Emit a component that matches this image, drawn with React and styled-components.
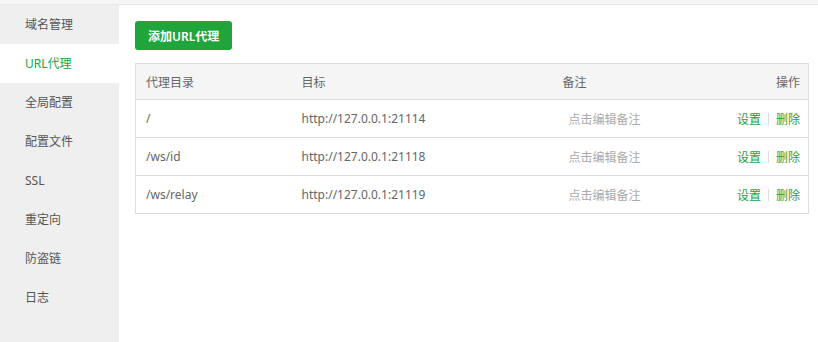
import React from "react";
import styled, { createGlobalStyle } from "styled-components";

const Global = createGlobalStyle`
  html, body { margin: 0; padding: 0; background: #fff; }
  body { font-family: "Noto Sans", "Noto Sans CJK SC", sans-serif; font-size: 12px; color: #666; }
`;

const Page = styled.div`
  width: 818px;
  height: 342px;
  display: flex;
  flex-direction: column;
  overflow: hidden;
`;

const TopStrip = styled.div`
  height: 4px;
  background: #f6f6f6;
  border-bottom: 1px solid #e6e6e6;
  flex: none;
`;

const Body = styled.div`
  flex: 1;
  display: flex;
`;

const Sidebar = styled.ul`
  width: 119px;
  margin: 0;
  padding: 0;
  list-style: none;
  background: #efefef;
  flex: none;
`;

const NavItem = styled.li`
  height: 39px;
  line-height: 39px;
  padding-left: 25px;
  font-size: 12px;
  color: ${(p) => (p.$active ? "#20a53a" : "#555")};
  background: ${(p) => (p.$active ? "#fff" : "transparent")};
`;

const Main = styled.div`
  flex: 1;
  padding: 16px 9px 0 16px;
`;

const AddButton = styled.button`
  height: 29px;
  padding: 0 13px;
  border: none;
  border-radius: 3px;
  background: #20a53a;
  color: #fff;
  font-family: inherit;
  font-size: 12px;
  font-weight: 600;
  cursor: pointer;
  display: block;
`;

const Table = styled.table`
  margin-top: 13px;
  width: 674px;
  border-collapse: collapse;
  border: 1px solid #ddd;
  table-layout: fixed;
`;

const Th = styled.th`
  height: 35px;
  background: #f5f5f5;
  font-weight: normal;
  color: #666;
  text-align: ${(p) => p.$align || "left"};
  padding: 0 ${(p) => p.$pr || 10}px 0 ${(p) => p.$pl || 10}px;
  border-bottom: 1px solid #ddd;
  font-size: 12px;
`;

const Td = styled.td`
  height: 37px;
  border-bottom: 1px solid #ddd;
  color: ${(p) => p.$color || "#666"};
  text-align: ${(p) => p.$align || "left"};
  padding: 0 ${(p) => p.$pr || 10}px 0 ${(p) => p.$pl || 10}px;
  font-size: 12px;
`;

const Link = styled.a`
  color: #20a53a;
  text-decoration: none;
  cursor: pointer;
`;

const Sep = styled.span`
  display: inline-block;
  width: 1px;
  height: 12px;
  background: #ddd;
  margin: 0 7px;
  vertical-align: -1px;
`;

const nav = ["域名管理", "URL代理", "全局配置", "配置文件", "SSL", "重定向", "防盗链", "日志"];
const rows = [
  ["/", "http://127.0.0.1:21114"],
  ["/ws/id", "http://127.0.0.1:21118"],
  ["/ws/relay", "http://127.0.0.1:21119"],
];

export default function App() {
  return (
    <Page>
      <Global />
      <TopStrip />
      <Body>
        <Sidebar>
          {nav.map((n, i) => (
            <NavItem key={n} $active={i === 1}>{n}</NavItem>
          ))}
        </Sidebar>
        <Main>
          <AddButton>添加URL代理</AddButton>
          <Table>
            <colgroup>
              <col style={{ width: 156 }} />
              <col style={{ width: 265 }} />
              <col style={{ width: 140 }} />
              <col />
            </colgroup>
            <thead>
              <tr>
                <Th>代理目录</Th>
                <Th>目标</Th>
                <Th $pl={6}>备注</Th>
                <Th $align="right" $pr={8}>操作</Th>
              </tr>
            </thead>
            <tbody>
              {rows.map(([dir, target]) => (
                <tr key={dir}>
                  <Td>{dir}</Td>
                  <Td>{target}</Td>
                  <Td $pl={12} $color="#aaa">点击编辑备注</Td>
                  <Td $align="right" $pr={8}>
                    <Link>设置</Link>
                    <Sep />
                    <Link>删除</Link>
                  </Td>
                </tr>
              ))}
            </tbody>
          </Table>
        </Main>
      </Body>
    </Page>
  );
}
